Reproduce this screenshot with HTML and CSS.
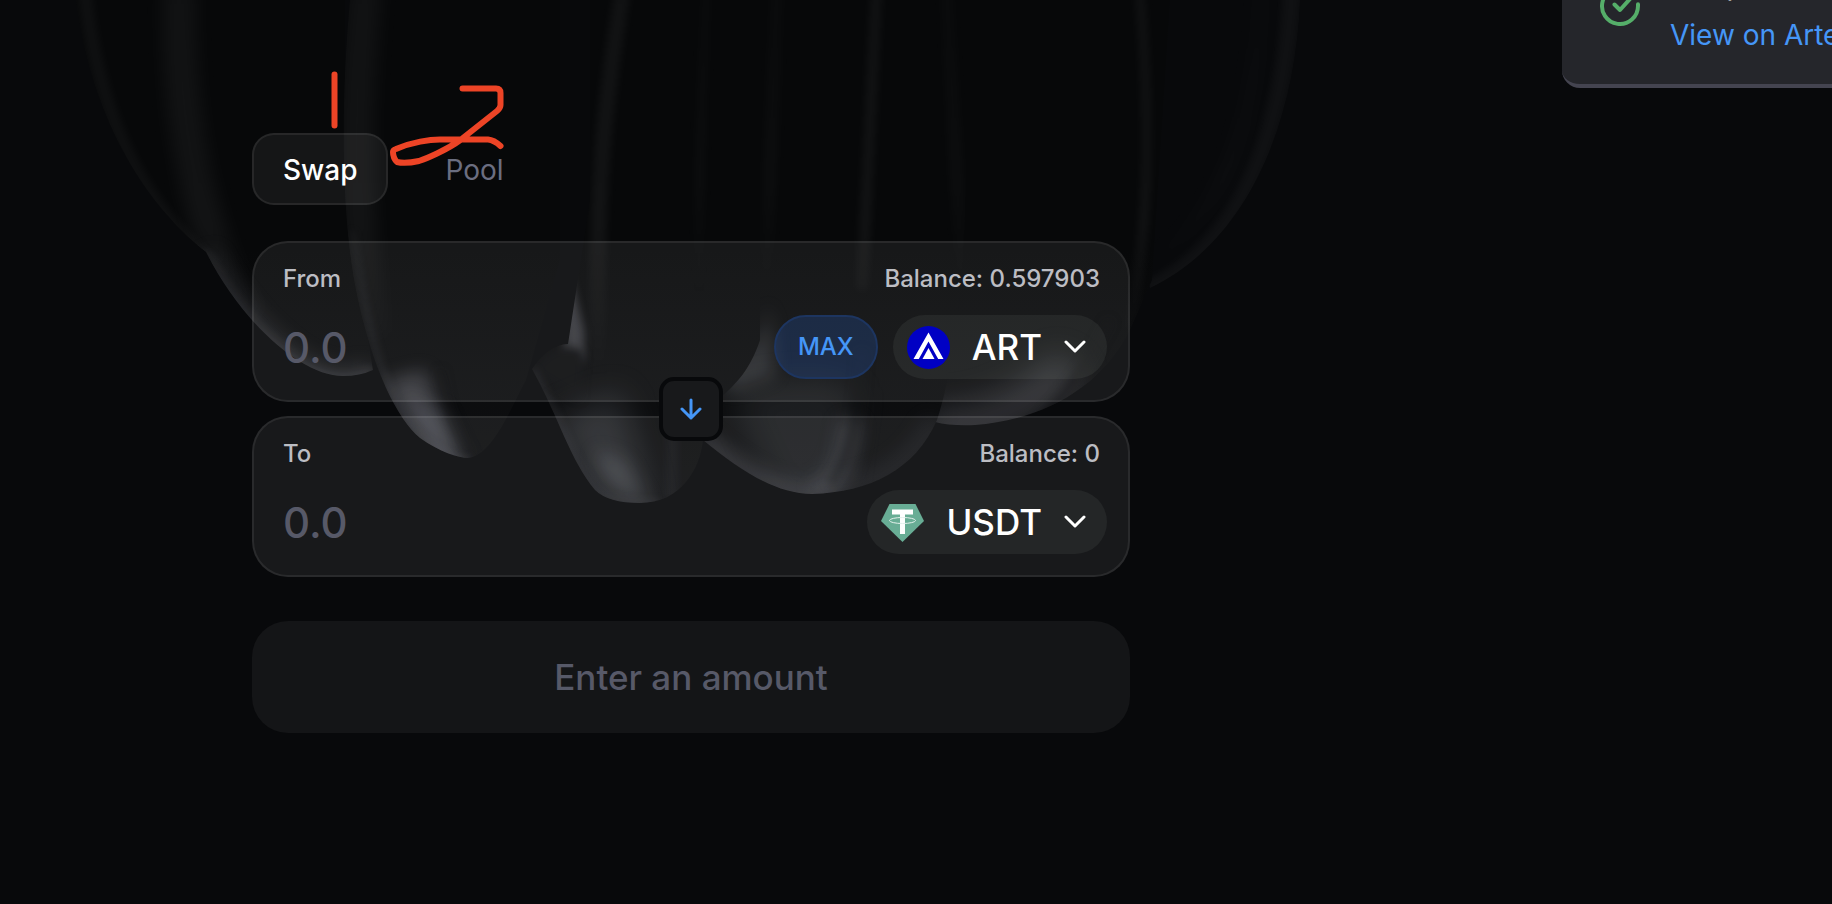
FILE: index.html
```html
<!DOCTYPE html>
<html lang="en">
<head>
<meta charset="utf-8">
<title>Swap</title>
<link rel="stylesheet" href="styles.css">
</head>
<body>
<svg class="backdrop" width="1400" height="520" viewBox="0 0 1400 520" aria-hidden="true">
  <defs>
    <filter id="b3" filterUnits="userSpaceOnUse" x="0" y="-80" width="1400" height="640" color-interpolation-filters="sRGB"><feGaussianBlur stdDeviation="4"/></filter>
    <filter id="b8" filterUnits="userSpaceOnUse" x="0" y="-80" width="1400" height="640" color-interpolation-filters="sRGB"><feGaussianBlur stdDeviation="9"/></filter>
    <filter id="b14" filterUnits="userSpaceOnUse" x="0" y="-80" width="1400" height="640" color-interpolation-filters="sRGB"><feGaussianBlur stdDeviation="16"/></filter>
    <linearGradient id="fade" gradientUnits="userSpaceOnUse" x1="0" y1="0" x2="0" y2="500">
      <stop offset="0" stop-color="#070809"/><stop offset=".5" stop-color="#070809"/><stop offset="1" stop-color="#0f1012"/>
    </linearGradient>
    <linearGradient id="band" gradientUnits="userSpaceOnUse" x1="0" y1="0" x2="0" y2="380">
      <stop offset="0" stop-color="#fff" stop-opacity=".045"/><stop offset=".6" stop-color="#fff" stop-opacity=".05"/><stop offset="1" stop-color="#fff" stop-opacity="0"/>
    </linearGradient>
    <linearGradient id="faint" gradientUnits="userSpaceOnUse" x1="0" y1="0" x2="0" y2="300">
      <stop offset="0" stop-color="#fff" stop-opacity=".015"/><stop offset=".6" stop-color="#fff" stop-opacity=".025"/><stop offset="1" stop-color="#fff" stop-opacity="0"/>
    </linearGradient>
    <linearGradient id="rim" gradientUnits="userSpaceOnUse" x1="0" y1="180" x2="0" y2="480">
      <stop offset="0" stop-color="#b4b6c4" stop-opacity=".03"/><stop offset=".5" stop-color="#b4b6c4" stop-opacity=".11"/><stop offset="1" stop-color="#b4b6c4" stop-opacity=".18"/>
    </linearGradient>
    <clipPath id="c1"><path d="M76 0C90 110 140 200 206 252C240 320 300 376 343 376Q360 376 373 370L345 200V0Z"/></clipPath>
    <clipPath id="c2"><path d="M350 0C340 110 342 220 356 290C372 370 398 420 420 438C440 452 458 458 468 458C492 456 510 410 526 380L560 260V0Z"/></clipPath>
    <clipPath id="c3"><path d="M532 369Q548 345 568 344L590 200V0H760V340C740 400 706 390 703 440C700 470 680 503 640 503Q608 503 595 490C570 460 560 420 532 369Z"/></clipPath>
    <clipPath id="c4"><path d="M703 440C740 470 775 494 812 494C870 492 915 470 937 420C960 350 975 200 960 0H690V376Z"/></clipPath>
    <clipPath id="c5"><path d="M935 422Q950 426 975 425C1040 420 1100 390 1130 330L1152 280L1170 0H960V300Z"/></clipPath>
    <clipPath id="c6"><path d="M1170 0H1300C1295 120 1250 240 1150 288L1140 240Z"/></clipPath>
  </defs>
  <g fill="none" clip-path="url(#c6)">
    <path d="M1293 -40C1290 120 1245 245 1147 290" stroke="#fff" stroke-opacity=".035" stroke-width="18" filter="url(#b3)"/>
    <path d="M1262 -40C1260 140 1220 220 1140 270" stroke="url(#faint)" stroke-width="14" filter="url(#b8)"/>
  </g>
  <g fill="none" clip-path="url(#c1)">
    <rect width="400" height="400" fill="url(#fade)"/>
    <path d="M82 -40C92 110 140 200 206 258" stroke="#fff" stroke-opacity=".035" stroke-width="14" filter="url(#b3)"/>
    <path d="M180 -40C174 120 200 240 250 320" stroke="url(#band)" stroke-width="34" filter="url(#b8)"/>
    <path d="M206 252C240 320 300 378 343 378Q360 378 373 370" stroke="url(#rim)" stroke-width="26" filter="url(#b8)"/>
    <path d="M206 252C240 320 300 378 343 378Q360 378 373 370" stroke="url(#rim)" stroke-width="8" filter="url(#b3)"/>
  </g>
  <g fill="none" clip-path="url(#c5)">
    <rect x="900" width="300" height="440" fill="url(#fade)"/>
    <path d="M1137 -40C1155 150 1145 240 1130 330" stroke="url(#band)" stroke-width="9" filter="url(#b3)"/>
    <path d="M925 425Q1010 430 1070 365" stroke="#b4b6c4" stroke-opacity=".22" stroke-width="36" filter="url(#b14)"/>
    <path d="M1020 440Q1075 390 1110 320" stroke="#0b0c0d" stroke-opacity=".6" stroke-width="8" filter="url(#b3)"/>
  </g>
  <g fill="none" clip-path="url(#c2)">
    <rect x="340" width="220" height="470" fill="url(#fade)"/>
    <path d="M368 -40C352 110 352 220 374 340" stroke="url(#band)" stroke-width="34" filter="url(#b8)"/>
    <path d="M352 230C372 370 398 420 420 438C440 454 458 462 470 460" stroke="url(#rim)" stroke-width="5" filter="url(#b3)"/>
    <path d="M385 380Q405 430 455 480L455 450Q435 400 425 370Z" fill="#b4b6c4" fill-opacity=".26" filter="url(#b8)"/>
    <path d="M400 395Q425 450 470 465L445 410Z" fill="#b4b6c4" fill-opacity=".14" filter="url(#b8)"/>
    <path d="M440 370Q450 430 472 455" stroke="#0b0c0e" stroke-opacity=".45" stroke-width="7" filter="url(#b3)"/>
  </g>
  <g fill="none" clip-path="url(#c4)">
    <rect x="680" width="300" height="500" fill="url(#fade)"/>
    <path d="M878 -40L862 290" stroke="url(#band)" stroke-width="11" filter="url(#b3)"/>
    <path d="M945 -40L962 280M778 -40L766 280" stroke="url(#faint)" stroke-width="14" filter="url(#b3)"/>
    <path d="M768 300Q768 350 716 366L730 390L775 375Z" fill="#b4b6c4" fill-opacity=".18" filter="url(#b8)"/>
    <path d="M730 390Q820 370 856 390L840 500H780Z" fill="#b4b6c4" fill-opacity=".1" filter="url(#b14)"/>
    <path d="M700 438C740 474 780 496 812 494Q845 480 850 420" stroke="#b4b6c4" stroke-opacity=".19" stroke-width="20" filter="url(#b8)"/>
    <path d="M862 350Q858 450 830 484" stroke="#0d0e10" stroke-opacity=".55" stroke-width="10" filter="url(#b3)"/>
    <path d="M937 420C915 470 870 492 812 494" stroke="#b4b6c4" stroke-opacity=".06" stroke-width="30" filter="url(#b8)"/>
  </g>
  <g fill="none" clip-path="url(#c3)">
    <rect x="520" width="250" height="510" fill="url(#fade)"/>
    <path d="M628 -40C605 90 592 200 600 400" stroke="url(#band)" stroke-width="16" filter="url(#b3)"/>
    <path d="M708 -40Q696 200 700 340" stroke="url(#faint)" stroke-width="10" filter="url(#b3)"/>
    <path d="M564 250V360H584V330Z" fill="#b4b6c4" fill-opacity=".27" filter="url(#b3)"/>
    <path d="M532 370Q560 336 584 352L580 400Z" fill="#0d0e10" filter="url(#b3)"/>
    <path d="M550 420Q590 470 600 500L650 510Q635 440 620 390Z" fill="#b4b6c4" fill-opacity=".17" filter="url(#b14)"/>
    <path d="M595 450Q600 490 650 506L625 460Z" fill="#b4b6c4" fill-opacity=".18" filter="url(#b8)"/>
    <path d="M532 369C560 420 570 460 595 490Q608 506 660 503" stroke="#b4b6c4" stroke-opacity=".12" stroke-width="6" filter="url(#b3)"/>
    <path d="M672 420V500" stroke="#b4b6c4" stroke-opacity=".05" stroke-width="12" filter="url(#b3)"/>
  </g>
</svg>

<main class="swap">
  <nav class="tabs">
    <button class="tab tab-active" type="button">Swap</button>
    <button class="tab" type="button">Pool</button>
  </nav>

  <div class="panels">
    <section class="panel">
      <div class="row">
        <label for="from">From</label>
        <span>Balance: 0.597903</span>
      </div>
      <div class="row row-main">
        <input class="amount" id="from" type="text" placeholder="0.0">
        <button class="max" type="button">MAX</button>
        <button class="token" type="button">
          <svg width="43" height="43" viewBox="0 0 43 43" aria-hidden="true">
            <circle cx="21.5" cy="21.5" r="21.5" fill="#0000c4"/>
            <path d="M21.5 6.500L36.500 33H31.200L21.500 15.500L11.800 33H6.500Z" fill="#fff"/>
            <path d="M21.500 22L27.500 33H15.500Z" fill="#fff"/>
          </svg>
          <span>ART</span>
          <svg class="chevron" width="22" height="14" viewBox="0 0 22 14" aria-hidden="true"><path d="M2 2L11 11L20 2"/></svg>
        </button>
      </div>
    </section>

    <button class="flip" type="button" aria-label="Switch tokens">
      <svg width="22" height="24" viewBox="0 0 22 24" aria-hidden="true"><path d="M11 3V21M2 12L11 21L20 12"/></svg>
    </button>

    <section class="panel">
      <div class="row">
        <label for="to">To</label>
        <span>Balance: 0</span>
      </div>
      <div class="row row-main">
        <input class="amount" id="to" type="text" placeholder="0.0">
        <button class="token" type="button">
          <svg width="43" height="43" viewBox="0 0 43 43" aria-hidden="true">
            <path d="M8.500 3H34.500L43 20L21.500 41L0 20Z" fill="#68ad95"/>
            <path d="M11 8.500H32V13.500H24V33H19V13.500H11Z" fill="#fff"/>
            <ellipse cx="21.500" cy="19.500" rx="13" ry="3" fill="none" stroke="#e4f1ed" stroke-width="1"/>
            <path d="M19 18H24V21H19Z" fill="#fff"/>
          </svg>
          <span>USDT</span>
          <svg class="chevron" width="22" height="14" viewBox="0 0 22 14" aria-hidden="true"><path d="M2 2L11 11L20 2"/></svg>
        </button>
      </div>
    </section>
  </div>

  <button class="submit" type="button" disabled>Enter an amount</button>
</main>

<aside class="toast">
  <svg width="44" height="44" viewBox="0 0 44 44" aria-hidden="true"><path d="M40 20.300V22A18 18 0 1 1 29.300 5.600M40 6L22 26L16.500 20.500"/></svg>
  <div class="toast-text">
    <span>Swap</span>
    <a href="#">View on Artela</a>
  </div>
</aside>

<svg class="marks" width="200" height="120" viewBox="0 0 200 120" aria-hidden="true">
  <path d="M14.500 14.500V65.500"/>
  <path d="M142.500 28.500H176Q180.500 28.500 180.500 33V45Q180.500 48 177 51L141 79.500C127 90 105 99 99 101Q85 104 77 102Q73 98 73 92Q73 90 76 89C92 82 110 79.500 120 79.500H168Q174 80 180.500 86"/>
</svg>
</body>
</html>
```
FILE: styles.css
```css
* {
  box-sizing: border-box;
}

body {
  margin: 0;
  min-height: 100vh;
  overflow-x: hidden;
  position: relative;
  background: #08090b;
  color: #fff;
  font-family: Inter, "Liberation Sans", sans-serif;
}

button,
input {
  margin: 0;
  padding: 0;
  border: 0;
  background: none;
  color: inherit;
  font: inherit;
}

.backdrop {
  position: absolute;
  top: 0;
  left: 0;
}

.swap {
  position: relative;
  width: 48%;
  max-width: 878px;
  margin-left: 252px;
  padding: 133px 0 64px;
}

.tabs {
  display: flex;
  gap: 26px;
  margin-bottom: 36px;
}

.tab {
  height: 72px;
  padding: 2px 29px 0;
  border: 2px solid transparent;
  border-radius: 22px;
  color: #6b6e80;
  font-size: 28px;
}

.tab-active {
  border-color: rgba(255, 255, 255, 0.08);
  background: rgba(255, 255, 255, 0.06);
  color: #fff;
  font-weight: 500;
}

.panels {
  display: grid;
  grid-template-columns: minmax(0, 1fr);
  gap: 14px;
  position: relative;
}

.panel {
  padding: 20px 21px 21px 29px;
  border: 2px solid rgba(255, 255, 255, 0.08);
  border-radius: 36px;
  background: rgba(255, 255, 255, 0.065);
}

.row {
  display: flex;
  justify-content: space-between;
  align-items: center;
  padding-right: 7px;
  color: #bcbdc3;
  font-size: 24px;
  font-weight: 500;
  line-height: 32px;
}

.row-main {
  gap: 15px;
  margin-top: 20px;
  padding-right: 0;
}

.amount {
  flex: 1;
  min-width: 0;
  height: 64px;
  outline: 0;
  color: #fff;
  font-size: 42px;
  font-weight: 500;
}

.amount::placeholder {
  color: #575968;
  opacity: 1;
}

.max {
  height: 64px;
  padding: 0 22px;
  border: 2px solid #1d3560;
  border-radius: 32px;
  background: rgba(38, 92, 190, 0.26);
  color: #4596f7;
  font-size: 24px;
}

.token {
  display: flex;
  align-items: center;
  gap: 22px;
  height: 64px;
  padding: 0 21px 0 14px;
  border-radius: 32px;
  background: rgba(245, 255, 230, 0.06);
  color: #fff;
  font-size: 35px;
  font-weight: 500;
}

.chevron,
.flip svg,
.toast svg,
.marks {
  fill: none;
  stroke-linecap: round;
  stroke-linejoin: round;
}

.chevron {
  stroke: #fff;
  stroke-width: 3;
}

.flip {
  display: grid;
  place-items: center;
  position: absolute;
  top: 50%;
  left: 50%;
  width: 64px;
  height: 64px;
  transform: translate(-50%, -50%);
  border: 4px solid #08090b;
  border-radius: 15px;
  background: #18191b;
}

.flip svg {
  stroke: #4596f7;
  stroke-width: 3;
}

.submit {
  display: block;
  width: 100%;
  height: 112px;
  margin-top: 44px;
  border-radius: 36px;
  background: #141517;
  color: #575968;
  font-size: 35px;
  font-weight: 500;
}

.toast {
  display: flex;
  align-items: flex-start;
  gap: 28px;
  position: absolute;
  top: -80px;
  right: 0;
  width: 270px;
  height: 168px;
  padding: 45px 0 0 36px;
  overflow: hidden;
  border-bottom: 4px solid #444450;
  border-radius: 0 0 0 18px;
  background: #25262b;
}

.toast svg {
  flex: none;
  margin-top: 19px;
  stroke: #55ae69;
  stroke-width: 4;
}

.toast-text {
  display: grid;
  gap: 10px;
  font-size: 28px;
  line-height: 40px;
  white-space: nowrap;
}

.toast a {
  color: #4596f7;
  text-decoration: none;
}

.marks {
  position: absolute;
  top: 60px;
  left: 320px;
  stroke: #ed4426;
  stroke-width: 6;
  pointer-events: none;
}
```
